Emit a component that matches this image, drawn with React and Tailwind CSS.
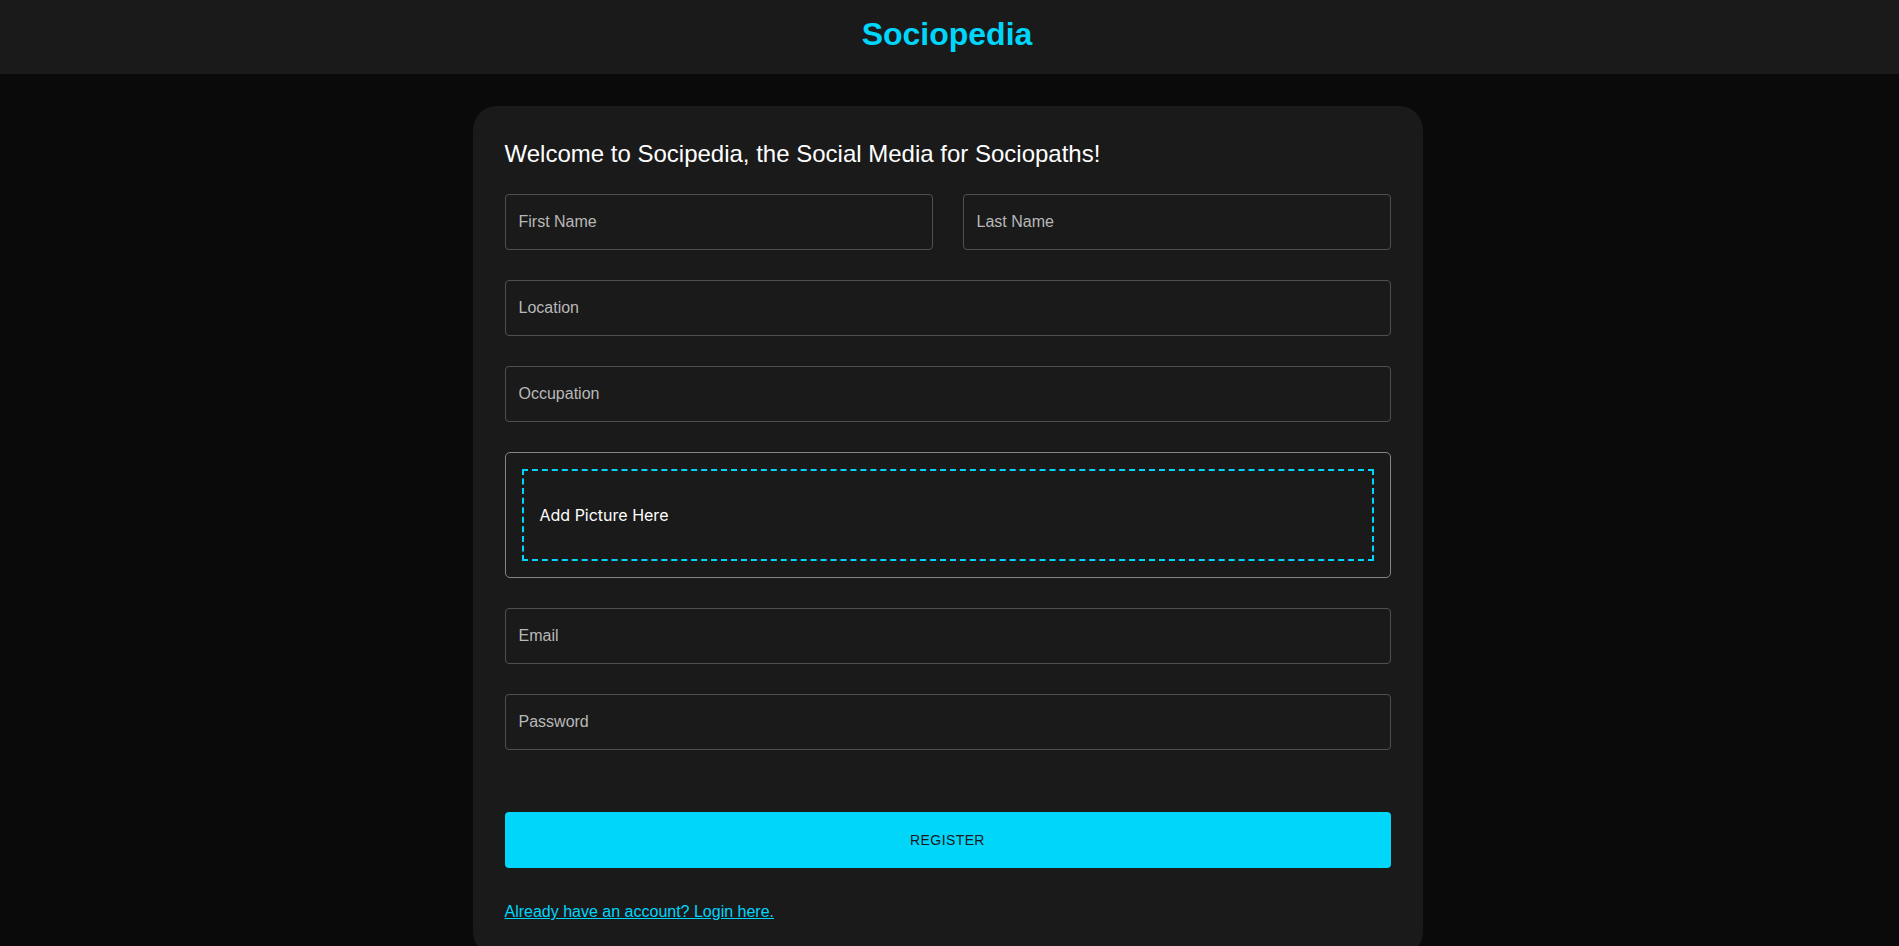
import { useState } from "react";

const fields = [
    { name: "firstName", label: "First Name", span: "col-span-2" },
    { name: "lastName", label: "Last Name", span: "col-span-2" },
    { name: "location", label: "Location", span: "col-span-4" },
    { name: "occupation", label: "Occupation", span: "col-span-4" },
];

function Field({ label, span, type = "text", value, onChange }) {
    return (
        <div className={span}>
            <input
                type={type}
                placeholder={label}
                value={value}
                onChange={onChange}
                className="h-[56px] w-full rounded border border-[#4f4f4f] bg-transparent px-[13px] font-['Liberation_Sans',Arial,sans-serif] text-[16px] text-white placeholder:text-[#b8b8b8] hover:border-white focus:border-2 focus:border-[#00d5fa] focus:px-[12px] focus:outline-none"
            />
        </div>
    );
}

function App() {
    const [values, setValues] = useState({
        firstName: "",
        lastName: "",
        location: "",
        occupation: "",
        email: "",
        password: "",
    });

    const update = (key) => (e) => setValues((v) => ({ ...v, [key]: e.target.value }));

    return (
        <div className="min-h-screen bg-[#0a0a0a] font-['Liberation_Sans',Arial,sans-serif]">
            {/* Top bar */}
            <header className="w-full bg-[#1a1a1a] px-[6%] pt-[13px] pb-[18px] text-center">
                <h1 className="-ml-[5px] text-[32px] font-bold leading-[1.334] text-[#00d5fa]">Sociopedia</h1>
            </header>

            {/* Register card */}
            <div className="mx-auto my-8 w-[950px] -translate-x-[2px] rounded-[1.5rem] bg-[#1a1a1a] p-8">
                <h5 className="mb-6 text-[24px] leading-[1.334] text-white">
                    Welcome to Socipedia, the Social Media for Sociopaths!
                </h5>

                <form onSubmit={(e) => e.preventDefault()}>
                    <div className="grid grid-cols-4 gap-[30px]">
                        {fields.map((f) => (
                            <Field
                                key={f.name}
                                label={f.label}
                                span={f.span}
                                value={values[f.name]}
                                onChange={update(f.name)}
                            />
                        ))}

                        {/* Picture dropzone */}
                        <div className="col-span-4 rounded-[5px] border border-[#858585] p-4">
                            <div className="cursor-pointer border-2 border-dashed border-[#00d5fa] p-4">
                                <p className="my-4 font-['Inter',sans-serif] text-[16px] leading-6 text-white">
                                    Add Picture Here
                                </p>
                            </div>
                        </div>

                        <Field label="Email" span="col-span-4" value={values.email} onChange={update("email")} />
                        <Field
                            label="Password"
                            span="col-span-4"
                            type="password"
                            value={values.password}
                            onChange={update("password")}
                        />
                    </div>

                    <button
                        type="submit"
                        className="mt-[62px] mb-8 w-full rounded bg-[#00d5fa] p-4 text-[14px] leading-[1.75] tracking-[0.4px] text-[#1a1a1a] uppercase hover:text-[#00d5fa] hover:bg-[#1a1a1a]"
                    >
                        Register
                    </button>

                    <a
                        href="#login"
                        className="block text-[16px] leading-6 text-[#00d5fa] underline hover:cursor-pointer"
                    >
                        Already have an account? Login here.
                    </a>
                </form>
            </div>
        </div>
    );
}

export default App;
